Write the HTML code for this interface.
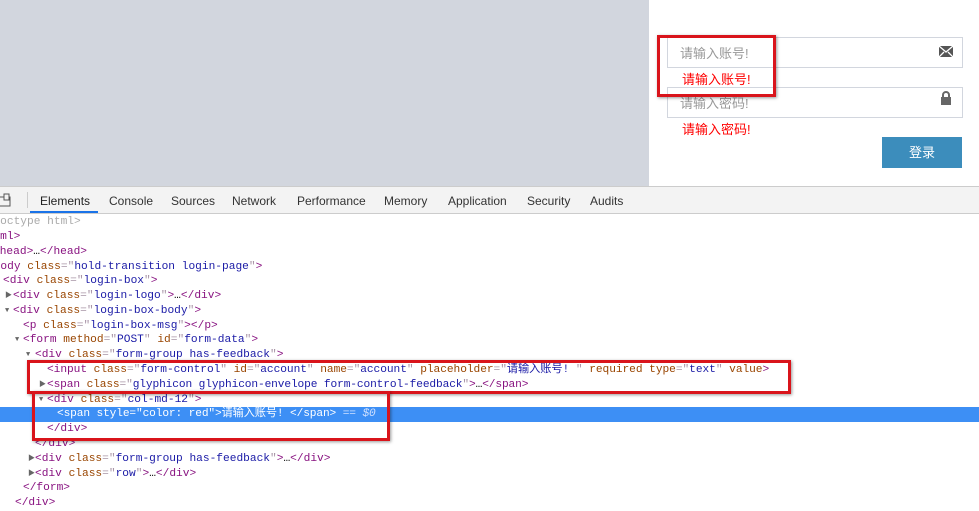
<!DOCTYPE html>
<html><head><meta charset="utf-8"><style>
*{margin:0;padding:0;box-sizing:border-box}
body{width:979px;height:500px;overflow:hidden;background:#fff;position:relative;font-family:"Liberation Sans","Noto Sans CJK SC",sans-serif}
.a{position:absolute}
.gray{left:0;top:0;width:649px;height:186px;background:#d2d6de}
.panel{left:649px;top:0;width:330px;height:186px;background:#fff}
.inp{border:1px solid #d2d6de;height:31px;width:296px;left:667px;font-size:13px;color:#999;padding:5px 12px;background:#fff}
.err{color:#f00;font-size:13px;left:682px}
.btn{left:882px;top:137px;width:80px;height:31px;background:#3c8dbc;color:#fff;font-size:13px;text-align:center;line-height:31px}
.rb{border:3px solid #d9141b;box-shadow:1px 1px 3px rgba(0,0,0,.4)}
.tb{left:0;top:186px;width:979px;height:28px;background:#f3f3f3;border-top:1px solid #ccc;border-bottom:1px solid #ccc;font-size:12px;color:#333}
.tb span{position:absolute;top:7px}
.code{font-family:"Liberation Mono","Noto Sans CJK SC",monospace;font-size:11.2px;white-space:pre;line-height:14.75px;height:14.75px}
.t{color:#881280}.n{color:#994500}.v{color:#1a1aa6}.p{color:#a894a6}.g{color:#aaa}
.ar{color:#666;font-size:7px}
.sel{left:0;top:407px;width:979px;height:15px;background:#3d8ff5}
</style></head><body>
<div class="a gray"></div><div class="a panel"></div>
<div class="a inp" style="top:37px">请输入账号!</div>
<svg class="a" style="left:939px;top:46px" width="14" height="11" viewBox="0 0 14 11"><path d="M0 0h14v11H0z" fill="#555"/><path d="M0 0l7 6 7-6M0 11l5-5M14 11l-5-5" stroke="#fff" stroke-width="1.3" fill="none"/></svg>
<div class="a err" style="top:69px">请输入账号!</div>
<div class="a inp" style="top:87px">请输入密码!</div>
<svg class="a" style="left:940px;top:91px" width="12" height="14" viewBox="0 0 12 14"><path d="M3 6V4a3 3 0 0 1 6 0v2" stroke="#666" stroke-width="2" fill="none"/><rect x="1" y="6" width="10" height="8" fill="#666"/></svg>
<div class="a err" style="top:119px">请输入密码!</div>
<div class="a btn">登录</div>
<div class="a rb" style="left:657px;top:35px;width:119px;height:62px"></div>

<div class="a tb">
<svg class="a" style="left:-2px;top:6px" width="14" height="14"><rect x="1" y="4" width="11" height="9" fill="none" stroke="#555"/><rect x="6" y="1" width="5" height="6" fill="#f3f3f3" stroke="#555"/></svg>
<div class="a" style="left:27px;top:5px;width:1px;height:16px;background:#ccc"></div>
<span style="left:40px;color:#222">Elements</span>
<div class="a" style="left:30px;top:24px;width:68px;height:2px;background:#1a73e8"></div>
<span style="left:109px">Console</span><span style="left:171px">Sources</span><span style="left:232px">Network</span><span style="left:297px">Performance</span><span style="left:384px">Memory</span><span style="left:448px">Application</span><span style="left:527px">Security</span><span style="left:590px">Audits</span>
</div>

<div class="a sel"></div>
<div class="a code g" style="left:-20px;top:215px">&lt;!doctype html&gt;</div>
<div class="a code" style="left:-20px;top:230px"><span class="t">&lt;html&gt;</span></div>
<div class="a code" style="left:-7px;top:245px"><span class="t">&lt;head&gt;</span>…<span class="t">&lt;/head&gt;</span></div>
<div class="a code" style="left:-13px;top:260px"><span class="t">&lt;body </span><span class="n">class</span><span class="p">="</span><span class="v">hold-transition login-page</span><span class="p">"</span><span class="t">&gt;</span></div>
<div class="a code" style="left:3px;top:274px"><span class="t">&lt;div </span><span class="n">class</span><span class="p">="</span><span class="v">login-box</span><span class="p">"</span><span class="t">&gt;</span></div>
<div class="a code ar" style="left:5px;top:289px">▶</div><div class="a code" style="left:13px;top:289px"><span class="t">&lt;div </span><span class="n">class</span><span class="p">="</span><span class="v">login-logo</span><span class="p">"</span><span class="t">&gt;</span>…<span class="t">&lt;/div&gt;</span></div>
<div class="a code ar" style="left:5px;top:304px">▼</div><div class="a code" style="left:13px;top:304px"><span class="t">&lt;div </span><span class="n">class</span><span class="p">="</span><span class="v">login-box-body</span><span class="p">"</span><span class="t">&gt;</span></div>
<div class="a code" style="left:23px;top:319px"><span class="t">&lt;p </span><span class="n">class</span><span class="p">="</span><span class="v">login-box-msg</span><span class="p">"</span><span class="t">&gt;&lt;/p&gt;</span></div>
<div class="a code ar" style="left:15px;top:333px">▼</div><div class="a code" style="left:23px;top:333px"><span class="t">&lt;form </span><span class="n">method</span><span class="p">="</span><span class="v">POST</span><span class="p">" </span><span class="n">id</span><span class="p">="</span><span class="v">form-data</span><span class="p">"</span><span class="t">&gt;</span></div>
<div class="a code ar" style="left:26px;top:348px">▼</div><div class="a code" style="left:35px;top:348px"><span class="t">&lt;div </span><span class="n">class</span><span class="p">="</span><span class="v">form-group has-feedback</span><span class="p">"</span><span class="t">&gt;</span></div>
<div class="a code" style="left:47px;top:363px;letter-spacing:-0.05px"><span class="t">&lt;input </span><span class="n">class</span><span class="p">="</span><span class="v">form-control</span><span class="p">" </span><span class="n">id</span><span class="p">="</span><span class="v">account</span><span class="p">" </span><span class="n">name</span><span class="p">="</span><span class="v">account</span><span class="p">" </span><span class="n">placeholder</span><span class="p">="</span><span class="v">请输入账号! </span><span class="p">" </span><span class="n">required type</span><span class="p">="</span><span class="v">text</span><span class="p">" </span><span class="n">value</span><span class="t">&gt;</span></div>
<div class="a code ar" style="left:39px;top:378px">▶</div><div class="a code" style="left:47px;top:378px;letter-spacing:-0.12px"><span class="t">&lt;span </span><span class="n">class</span><span class="p">="</span><span class="v">glyphicon glyphicon-envelope form-control-feedback</span><span class="p">"</span><span class="t">&gt;</span>…<span class="t">&lt;/span&gt;</span></div>
<div class="a code ar" style="left:39px;top:393px">▼</div><div class="a code" style="left:47px;top:393px"><span class="t">&lt;div </span><span class="n">class</span><span class="p">="</span><span class="v">col-md-12</span><span class="p">"</span><span class="t">&gt;</span></div>
<div class="a code" style="left:57px;top:407px;color:#fff;letter-spacing:-0.13px">&lt;span style="color: red"&gt;请输入账号! &lt;/span&gt; <i style="color:#cfe0ff">== $0</i></div>
<div class="a code" style="left:47px;top:422px"><span class="t">&lt;/div&gt;</span></div>
<div class="a code" style="left:35px;top:437px"><span class="t">&lt;/div&gt;</span></div>
<div class="a code ar" style="left:28px;top:452px">▶</div><div class="a code" style="left:35px;top:452px"><span class="t">&lt;div </span><span class="n">class</span><span class="p">="</span><span class="v">form-group has-feedback</span><span class="p">"</span><span class="t">&gt;</span>…<span class="t">&lt;/div&gt;</span></div>
<div class="a code ar" style="left:28px;top:467px">▶</div><div class="a code" style="left:35px;top:467px"><span class="t">&lt;div </span><span class="n">class</span><span class="p">="</span><span class="v">row</span><span class="p">"</span><span class="t">&gt;</span>…<span class="t">&lt;/div&gt;</span></div>
<div class="a code" style="left:23px;top:481px"><span class="t">&lt;/form&gt;</span></div>
<div class="a code" style="left:15px;top:496px"><span class="t">&lt;/div&gt;</span></div>

<div class="a rb" style="left:27px;top:360px;width:764px;height:34px"></div>
<div class="a rb" style="left:32px;top:391px;width:358px;height:50px"></div>
</body></html>
